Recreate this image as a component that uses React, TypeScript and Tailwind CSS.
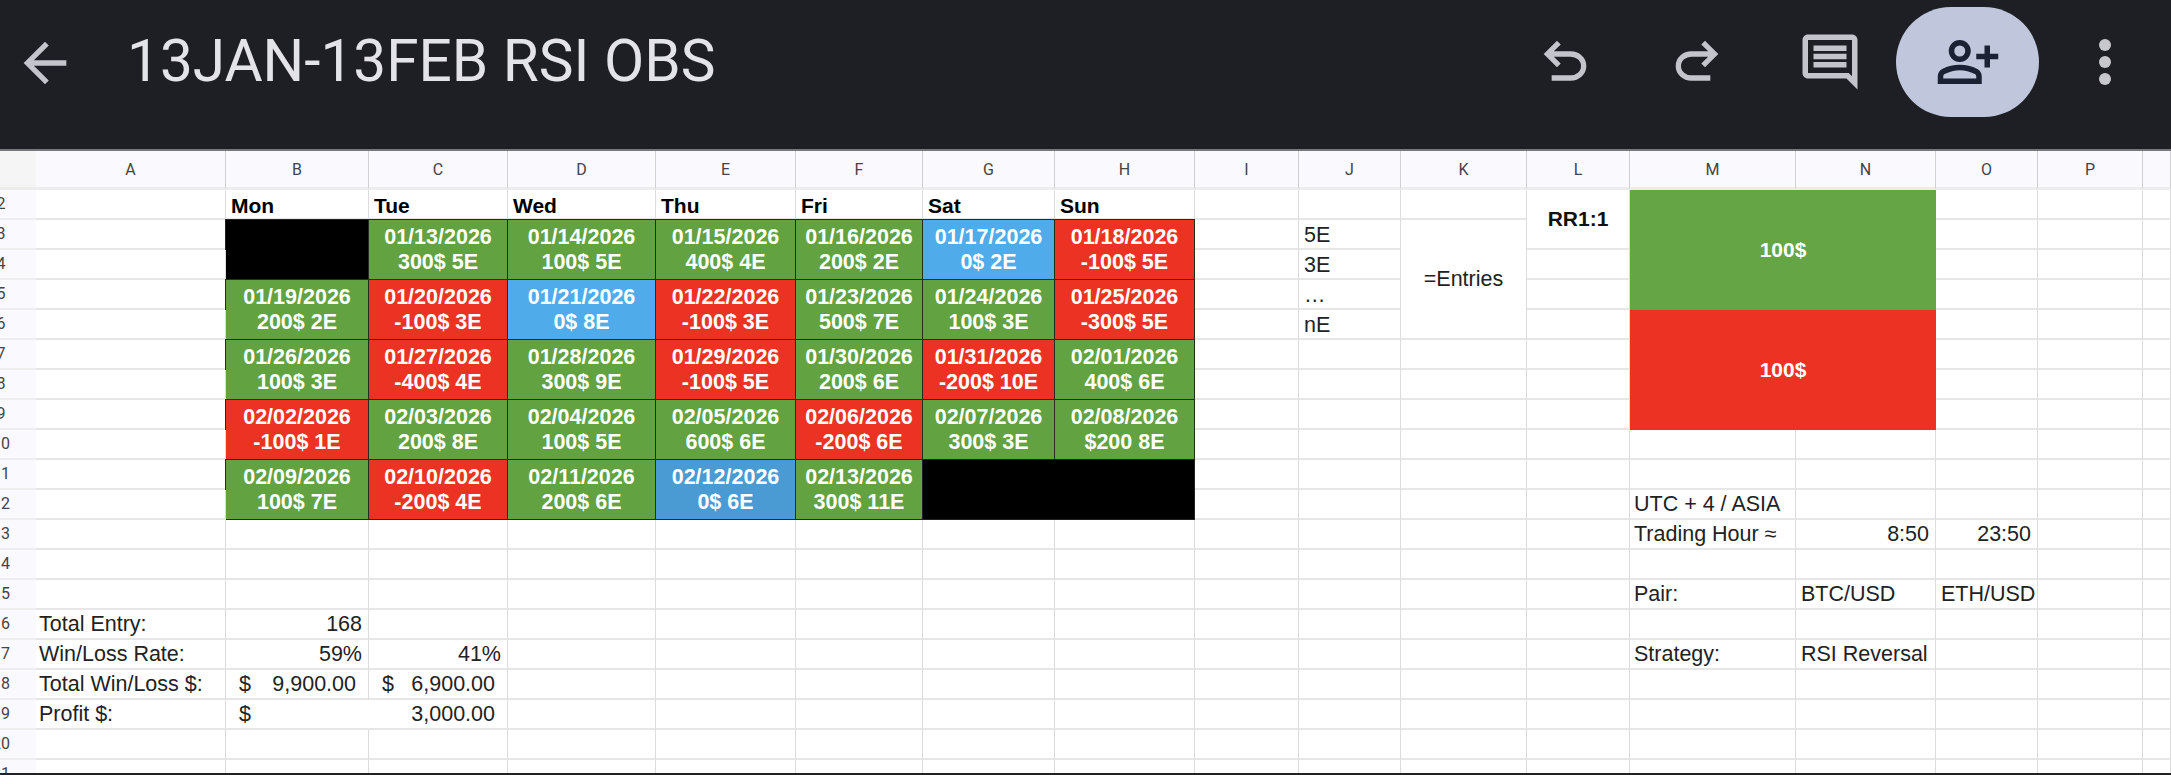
import { Fragment, type ReactNode } from "react";

const columns = "ABCDEFGHIJKLMNOPQ".split("");
const rows = Array.from({ length: 20 }, (_, i) => i + 2);

const green = "bg-[#62a241]";
const red = "bg-[#ec3323]";
const blue = "bg-[#4fabea]";

const days: Record<string, [string, string, string]> = {
  C3: ["01/13/2026", "300$ 5E", green],
  D3: ["01/14/2026", "100$ 5E", green],
  E3: ["01/15/2026", "400$ 4E", green],
  F3: ["01/16/2026", "200$ 2E", green],
  G3: ["01/17/2026", "0$ 2E", blue],
  H3: ["01/18/2026", "-100$ 5E", red],
  B5: ["01/19/2026", "200$ 2E", green],
  C5: ["01/20/2026", "-100$ 3E", red],
  D5: ["01/21/2026", "0$ 8E", blue],
  E5: ["01/22/2026", "-100$ 3E", red],
  F5: ["01/23/2026", "500$ 7E", green],
  G5: ["01/24/2026", "100$ 3E", green],
  H5: ["01/25/2026", "-300$ 5E", red],
  B7: ["01/26/2026", "100$ 3E", green],
  C7: ["01/27/2026", "-400$ 4E", red],
  D7: ["01/28/2026", "300$ 9E", green],
  E7: ["01/29/2026", "-100$ 5E", red],
  F7: ["01/30/2026", "200$ 6E", green],
  G7: ["01/31/2026", "-200$ 10E", red],
  H7: ["02/01/2026", "400$ 6E", green],
  B9: ["02/02/2026", "-100$ 1E", red],
  C9: ["02/03/2026", "200$ 8E", green],
  D9: ["02/04/2026", "100$ 5E", green],
  E9: ["02/05/2026", "600$ 6E", green],
  F9: ["02/06/2026", "-200$ 6E", red],
  G9: ["02/07/2026", "300$ 3E", green],
  H9: ["02/08/2026", "$200 8E", green],
  B11: ["02/09/2026", "100$ 7E", green],
  C11: ["02/10/2026", "-200$ 4E", red],
  D11: ["02/11/2026", "200$ 6E", green],
  E11: ["02/12/2026", "0$ 6E", "bg-[#4a9ad4]"],
  F11: ["02/13/2026", "300$ 11E", green],
};

const bold: Record<string, string> = {
  B2: "Mon",
  C2: "Tue",
  D2: "Wed",
  E2: "Thu",
  F2: "Fri",
  G2: "Sat",
  H2: "Sun",
};

const leftText: Record<string, string> = {
  A16: "Total Entry:",
  A17: "Win/Loss Rate:",
  A18: "Total Win/Loss $:",
  A19: "Profit $:",
  J3: "5E",
  J4: "3E",
  J5: "…",
  J6: "nE",
  M12: "UTC + 4 / ASIA",
  M13: "Trading Hour ≈",
  M15: "Pair:",
  N15: "BTC/USD",
  O15: "ETH/USD",
  M17: "Strategy:",
  N17: "RSI Reversal",
};

const rightText: Record<string, string> = {
  B16: "168",
  B17: "59%",
  C17: "41%",
  N13: "8:50",
  O13: "23:50",
};

// cells swallowed by a merged neighbour, auto placement fills them from the span
const covered = new Set([
  "B4",
  ...["C", "D", "E", "F", "G", "H"].flatMap((c) => [4, 6, 8, 10, 12].map((r) => c + r)),
  "B6",
  "B8",
  "B10",
  "B12",
  "H11",
  "K4",
  "K5",
  "K6",
  "L3",
  "C19",
  ...[2, 3, 4, 5, 6, 7, 8, 9].flatMap((r) => (r === 2 || r === 6 ? ["N" + r] : ["M" + r, "N" + r])),
]);

const gridLine = "border-r border-b-2 border-r-[#dcdcdc] border-b-[#e6e6e6]";

function Text({ children, right, inset }: { children: ReactNode; right?: boolean; inset: string }) {
  return (
    <div
      className={`${gridLine} flex items-end overflow-visible whitespace-nowrap text-[21.5px] leading-[26px] text-[#222] ${
        right ? "justify-end pb-px pr-[6px]" : inset
      }`}
    >
      {children}
    </div>
  );
}

function Cell({ id }: { id: string }) {
  if (covered.has(id)) return null;

  if (days[id]) {
    const [date, result, color] = days[id];
    return (
      <div
        className={`${color} row-span-2 -ml-px -mt-px flex flex-col items-center justify-center border border-[#233018] text-[21.5px] font-bold leading-[25px] text-white`}
      >
        <span>{date}</span>
        <span>{result}</span>
      </div>
    );
  }

  if (id === "B3") return <div className="row-span-2 -ml-px -mt-px border border-[#222] bg-black" />;
  if (id === "G11") return <div className="col-span-2 row-span-2 -ml-px -mt-px border border-[#222] bg-black" />;

  if (id === "M2" || id === "M6") {
    return (
      <div
        className={`col-span-2 row-span-4 flex items-center justify-center text-[21px] font-bold text-white ${
          id === "M2" ? "bg-[#66a545]" : "bg-[#ec3323]"
        }`}
      >
        100$
      </div>
    );
  }

  if (id === "K3") {
    return (
      <div className={`${gridLine} row-span-4 flex items-center justify-center text-[21.5px] text-[#222]`}>=Entries</div>
    );
  }

  if (id === "L2") {
    return (
      <div className={`${gridLine} row-span-2 flex items-center justify-center text-[21px] font-bold text-[#111]`}>
        RR1:1
      </div>
    );
  }

  if (id === "B18" || id === "C18") {
    return (
      <div className={`${gridLine} flex items-end justify-between pb-px pl-[13px] pr-[12px] text-[21.5px] leading-[26px] text-[#222]`}>
        <span>$</span>
        <span>{id === "B18" ? "9,900.00" : "6,900.00"}</span>
      </div>
    );
  }

  if (id === "B19") {
    return (
      <div className={`${gridLine} col-span-2 flex items-end justify-between pb-px pl-[13px] pr-[12px] text-[21.5px] leading-[26px] text-[#222]`}>
        <span>$</span>
        <span>3,000.00</span>
      </div>
    );
  }

  if (bold[id]) {
    return (
      <div className={`${gridLine} flex items-end pl-[5px] text-[21px] font-bold leading-[24px] text-black`}>
        {bold[id]}
      </div>
    );
  }

  if (leftText[id]) {
    const inset =
      id[0] === "A" ? "pb-px pl-[3px]" : id[0] === "M" ? "pb-px pl-[4px]" : id[0] === "J" ? "pl-[5px]" : "pb-px pl-[5px]";
    return <Text inset={inset}>{leftText[id]}</Text>;
  }
  if (rightText[id]) {
    return (
      <Text right inset="">
        {rightText[id]}
      </Text>
    );
  }

  return <div className={gridLine} />;
}

function HeaderIcon({ d, className }: { d: string; className: string }) {
  return (
    <svg viewBox="0 0 24 24" fill="currentColor" className={className}>
      <path d={d} />
    </svg>
  );
}

export default function App() {
  return (
    <div className="flex h-[775px] flex-col overflow-hidden bg-white font-['Liberation_Sans',Arial,sans-serif]">
      <header className="flex h-[151px] shrink-0 items-center border-b-2 border-[#77787c] bg-[#1e1f24] text-[#c4c5cc]">
        <HeaderIcon
          className="ml-[13px] h-[64px] w-[64px] -translate-y-[12px]"
          d="M20 11H7.83l5.59-5.59L12 4l-8 8 8 8 1.41-1.41L7.83 13H20z"
        />
        <h1 className="ml-[50px] -translate-y-[13px] font-['Roboto',sans-serif] text-[58.5px] font-normal leading-none text-[#e3e3e8]">
          13JAN-13FEB RSI OBS
        </h1>
        <div className="ml-auto flex -translate-y-[13px] items-center">
          <HeaderIcon
            className="h-[64px] w-[64px]"
            d="M7 19v-2h7.1q1.575 0 2.738-1T18 13.5T16.838 11T14.1 10H7.8l2.6 2.6L9 14 4 9l5-5 1.4 1.4L7.8 8h6.3q2.425 0 4.163 1.575T20 13.5t-1.737 3.925T14.1 19z"
          />
          <HeaderIcon
            className="ml-[68px] h-[64px] w-[64px]"
            d="M9.9 19q-2.425 0-4.163-1.575T4 13.5t1.738-3.925T9.9 8h6.3l-2.6-2.6L15 4l5 5-5 5-1.4-1.4 2.6-2.6H9.9q-1.575 0-2.738 1T6 13.5T7.163 16 9.9 17H17v2z"
          />
          <svg viewBox="0 0 24 24" fill="currentColor" className="ml-[68px] h-[66px] w-[66px]">
            <path d="M20 17.17 18.83 16H4V4h16v13.17zM20 2H4c-1.1 0-2 .9-2 2v12c0 1.1.9 2 2 2h14l4 4V4c0-1.1-.9-2-2-2z" />
            <path d="M6 12h12v2H6zM6 9h12v2H6zM6 6h12v2H6z" />
          </svg>
          <button
            type="button"
            className="ml-[33px] flex h-[110px] w-[143px] items-center justify-center rounded-[55px] bg-[#c0c7dc] text-[#1a2233]"
          >
            <HeaderIcon
              className="h-[66px] w-[66px]"
              d="M18 14v-3h-3V9h3V6h2v3h3v2h-3v3zm-9-2q-1.65 0-2.825-1.175T5 8t1.175-2.825T9 4t2.825 1.175T13 8t-1.175 2.825T9 12m-8 8v-2.8q0-.85.438-1.562T2.6 14.55q1.55-.775 3.15-1.162T9 13t3.25.388 3.15 1.162q.725.375 1.163 1.088T17 17.2V20zm2-2h12v-.8q0-.275-.137-.5t-.363-.35q-1.35-.675-2.725-1.012T9 15t-2.775.338-2.725 1.012q-.225.125-.363.35T3 17.2zm6-8q.825 0 1.413-.587T11 8t-.587-1.412T9 6t-1.412.588T7 8t.588 1.413T9 10"
            />
          </button>
          <div className="ml-[60px] mr-[60px] flex flex-col gap-[5px]">
            <span className="h-[12px] w-[12px] rounded-full bg-[#c8c8cc]" />
            <span className="h-[12px] w-[12px] rounded-full bg-[#c8c8cc]" />
            <span className="h-[12px] w-[12px] rounded-full bg-[#c8c8cc]" />
          </div>
        </div>
      </header>

      <div className="grid h-[622px] shrink-0 grid-cols-[36px_190px_143px_139px_148px_140px_127px_132px_140px_104px_102px_126px_103px_166px_140px_102px_105px_1fr] grid-rows-[39px_repeat(20,30px)] overflow-hidden">
        <div className="border-b-[3px] border-[#ececec] bg-[#f5f5f5]" />
        {columns.map((c) => (
          <div
            key={c}
            className="flex items-center justify-center border-b-[3px] border-r border-b-[#ececec] border-r-[#d0d0d4] bg-[#f9f9fe] pt-px font-['Roboto',sans-serif] text-[16px] text-[#444]"
          >
            {c === "Q" ? "" : c}
          </div>
        ))}
        {rows.map((r) => (
          <Fragment key={r}>
            {/* the row numbers are centred on the screen edge, so the picture cuts them */}
            <div className="flex items-center overflow-hidden border-b-2 border-[#eeeeee] bg-[#f9f9fe] font-['Roboto',sans-serif] text-[16px] text-[#444]">
              <span className="flex w-[2px] justify-center whitespace-nowrap">{r}</span>
            </div>
            {columns.map((c) => (
              <Cell key={c + r} id={c + r} />
            ))}
          </Fragment>
        ))}
      </div>
      <div className="h-[2px] bg-[#222]" />
    </div>
  );
}
